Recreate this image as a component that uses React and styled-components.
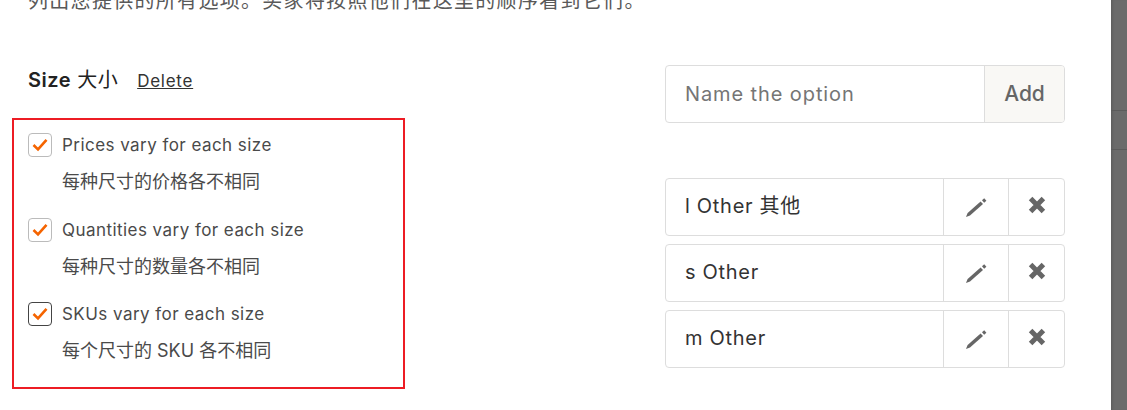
import React from 'react';
import styled, { createGlobalStyle } from 'styled-components';

const GlobalStyle = createGlobalStyle`
    html, body {
        margin: 0;
        padding: 0;
        background: #fff;
    }
    body {
        font-family: 'Inter', 'Noto Sans CJK SC', sans-serif;
        color: #222;
    }
`;

const sizeOptions = [
    { label: 'Prices vary for each size', note: '每种尺寸的价格各不相同' },
    { label: 'Quantities vary for each size', note: '每种尺寸的数量各不相同' },
    { label: 'SKUs vary for each size', note: '每个尺寸的 SKU 各不相同', active: true },
];

const values = ['l Other 其他', 's Other', 'm Other'];

const Check = () => (
    <svg width='18' height='16' viewBox='0 0 18 16'>
        <path
            d='M2.5 8 L7 12.4 L15.5 2.8'
            fill='none'
            stroke='#f56400'
            strokeWidth='2.6'
        />
    </svg>
);

const Pencil = () => (
    <svg width='24' height='22' viewBox='0 0 24 22'>
        <path d='M2 21 L3.6 17 L16.6 5.4 L19 8 L6 19.4 Z' fill='#666' />
        <path d='M18 4.2 L20.2 2.2 L22.4 4.8 L20.2 6.8 Z' fill='#666' />
    </svg>
);

const Cross = () => (
    <svg width='20' height='20' viewBox='0 0 20 20'>
        <path
            d='M3.6 3.6 L16.4 16.4 M16.4 3.6 L3.6 16.4'
            stroke='#666'
            strokeWidth='5'
            fill='none'
        />
    </svg>
);

export default () => {
    return (
        <Page>
            <GlobalStyle />
            <Panel>
                <Intro>
                    <IntroText>
                        列出您提供的所有选项。买家将按照他们在这里的顺序看到它们。
                    </IntroText>
                </Intro>
                <Columns>
                    <LeftColumn>
                        <Heading>
                            <Title>
                                <b>Size</b> 大小
                            </Title>
                            <DeleteLink>Delete</DeleteLink>
                        </Heading>
                        <Highlight>
                            {sizeOptions.map((option) => (
                                <Option key={option.label}>
                                    <OptionRow>
                                        <CheckBox $active={option.active}>
                                            <Check />
                                        </CheckBox>
                                        <OptionLabel>{option.label}</OptionLabel>
                                    </OptionRow>
                                    <OptionNote>{option.note}</OptionNote>
                                </Option>
                            ))}
                        </Highlight>
                    </LeftColumn>
                    <RightColumn>
                        <AddBox>
                            <Placeholder>Name the option</Placeholder>
                            <AddButton>Add</AddButton>
                        </AddBox>
                        <ValueList>
                            {values.map((value) => (
                                <ValueRow key={value}>
                                    <ValueName>{value}</ValueName>
                                    <EditButton>
                                        <Pencil />
                                    </EditButton>
                                    <RemoveButton>
                                        <Cross />
                                    </RemoveButton>
                                </ValueRow>
                            ))}
                        </ValueList>
                    </RightColumn>
                </Columns>
            </Panel>
            <Backdrop>
                <BackdropRow $height='110px' />
                <BackdropRow $height='38px' />
            </Backdrop>
        </Page>
    );
};

const Page = styled.div`
    display: flex;
    width: 1127px;
    height: 410px;
    overflow: hidden;
`;
const Panel = styled.div`
    width: 1111px;
    flex-shrink: 0;
    background: #fff;
`;
const Intro = styled.div`
    height: 12px;
    padding-left: 28px;
    overflow: hidden;
`;
const IntroText = styled.div`
    margin-top: -12px;
    font-size: 20px;
    letter-spacing: 1.3px;
    line-height: 27px;
    white-space: nowrap;
    color: #595959;
`;
const Columns = styled.div`
    display: flex;
`;
const LeftColumn = styled.div`
    width: 393px;
    margin-left: 12px;
`;
const Heading = styled.div`
    display: flex;
    align-items: baseline;
    height: 106px;
    padding: 54px 0 0 16px;
    box-sizing: border-box;
`;
const Title = styled.div`
    font-size: 20px;
    line-height: 28px;
    letter-spacing: 0.5px;
    color: #222;
    b {
        font-weight: 600;
    }
`;
const DeleteLink = styled.a`
    margin-left: 19px;
    font-size: 17px;
    letter-spacing: 0.75px;
    color: #333;
    text-decoration: underline;
`;
const Highlight = styled.div`
    display: flex;
    flex-direction: column;
    gap: 23.5px;
    height: 271px;
    padding: 12px 0 0 14px;
    box-sizing: border-box;
    border: 2px solid #ed1c24;
`;
const Option = styled.div`
    display: flex;
    flex-direction: column;
`;
const OptionRow = styled.div`
    display: flex;
    align-items: center;
    height: 26px;
`;
const CheckBox = styled.span`
    display: flex;
    align-items: center;
    justify-content: center;
    width: 24px;
    height: 24px;
    box-sizing: border-box;
    border: 1px solid ${(props) => (props.$active ? '#444' : '#bbb')};
    border-radius: 4px;
    background: #fff;
`;
const OptionLabel = styled.span`
    margin-left: 10px;
    font-size: 17px;
    letter-spacing: 0.45px;
    color: #4a4a4a;
`;
const OptionNote = styled.div`
    margin: 13px 0 0 34px;
    font-size: 18px;
    line-height: 22px;
    color: #4a4a4a;
`;
const RightColumn = styled.div`
    width: 400px;
    margin-left: 260px;
    padding-top: 53px;
`;
const AddBox = styled.div`
    display: flex;
    height: 58px;
    box-sizing: border-box;
    border: 1px solid #ddd;
    border-radius: 4px;
    overflow: hidden;
`;
const Placeholder = styled.div`
    flex: 1;
    display: flex;
    align-items: center;
    padding-left: 19px;
    font-size: 20px;
    letter-spacing: 0.9px;
    color: #757575;
`;
const AddButton = styled.div`
    display: flex;
    align-items: center;
    justify-content: center;
    width: 80px;
    box-sizing: border-box;
    padding-bottom: 2px;
    font-size: 21px;
    font-weight: 500;
    color: #666;
    background: #f9f8f5;
    border-left: 1px solid #ddd;
`;
const ValueList = styled.div`
    display: flex;
    flex-direction: column;
    gap: 8px;
    margin-top: 55px;
`;
const ValueRow = styled.div`
    display: flex;
    height: 58px;
    box-sizing: border-box;
    border: 1px solid #ddd;
    border-radius: 4px;
`;
const ValueName = styled.div`
    flex: 1;
    padding-left: 19px;
    font-size: 20px;
    letter-spacing: 0.7px;
    line-height: 55px;
    color: #333;
`;
const EditButton = styled.div`
    display: flex;
    align-items: center;
    justify-content: center;
    width: 65px;
    box-sizing: border-box;
    border-left: 1px solid #ddd;
`;
const RemoveButton = styled.div`
    display: flex;
    align-items: center;
    justify-content: center;
    width: 56px;
    padding-bottom: 4px;
    box-sizing: border-box;
    border-left: 1px solid #ddd;
`;
const Backdrop = styled.div`
    flex: 1;
    background: #6b6b6b;
    box-shadow: inset 3px 0 3px -2px #5a5a5a;
`;
const BackdropRow = styled.div`
    height: ${(props) => props.$height};
    border-bottom: 1px solid #5c5c5c;
`;
